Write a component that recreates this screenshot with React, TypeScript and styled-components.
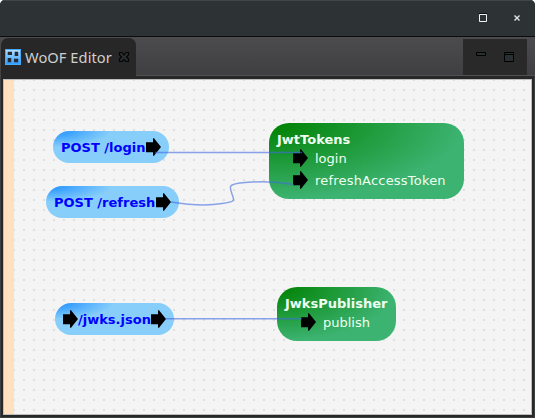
import React from "react";
import styled, { createGlobalStyle } from "styled-components";

const GlobalStyle = createGlobalStyle`
  * { box-sizing: border-box; }
  body { margin: 0; background: #fff; overflow: hidden; }
`;

const Window = styled.div`
  display: flex;
  flex-direction: column;
  width: 535px;
  height: 418px;
  background: #2d3235;
  border-radius: 5px 5px 0 0;
  overflow: hidden;
`;

const TitleBar = styled.header`
  display: flex;
  flex: none;
  justify-content: flex-end;
  align-items: flex-start;
  height: 37px;
  background: #2d3234;
  border-top: 1px solid #414648;
  border-bottom: 1px solid #0b0c0c;
`;

const TitleIcons = styled.svg`
  display: block;
  width: 75px;
  height: 34px;
`;

const TabBar = styled.div`
  display: flex;
  flex: none;
  justify-content: space-between;
  height: 39px;
  padding: 1px 8px 0 1px;
  background: linear-gradient(#4c4c4e, #3f3f41);
  border-bottom: 1px solid #515153;
`;

const Tab = styled.div`
  display: flex;
  align-items: center;
  width: 135px;
  height: 38px;
  margin-bottom: -1px;
  padding-left: 4px;
  background: #272727;
  border-radius: 7px 7px 0 0;
`;

const TabLabel = styled.span`
  width: 97px;
  flex: none;
  padding-left: 4px;
  font: 14.67px/20px "Noto Sans", sans-serif;
  letter-spacing: 0.06px;
  color: #cfcfcf;
  white-space: nowrap;
`;

const Icon = styled.svg`
  display: block;
  flex: none;
`;

const ViewTools = styled.div`
  width: 64px;
  height: 36px;
  margin-top: 1px;
  background: #292929;
`;

const Frame = styled.div`
  flex: 1;
  display: flex;
  padding: 3px 2px 2px 2px;
  background: #272727;
  border: solid #3b4042;
  border-width: 0 1px 1px 1px;
`;

const Canvas = styled.main`
  position: relative;
  flex: 1;
  border: 1px solid #bdbdbd;
  background:
    linear-gradient(90deg, #ffe1bf 10px, transparent 10px),
    conic-gradient(from 90deg at 8px 8px, #dfdfdf 90deg, transparent 0) 1px 1px / 10px 10px,
    #f4f4f4;
`;

const Wires = styled.svg`
  position: absolute;
  left: 0;
  top: 0;
  width: 527px;
  height: 334px;
`;

/* Diagram nodes sit at free positions on the canvas. */
const Endpoint = styled.div<{ $x: number; $y: number; $w: number }>`
  position: absolute;
  left: ${(p) => p.$x}px;
  top: ${(p) => p.$y}px;
  width: ${(p) => p.$w}px;
  height: 32px;
  padding: 0 8px;
  display: flex;
  align-items: center;
  border-radius: 16px;
  background: radial-gradient(50% 50% at 0 0, dodgerblue, lightskyblue);
  font: bold 13px/16px "DejaVu Sans", sans-serif;
  color: #0000ff;
  white-space: nowrap;
`;

const EndpointName = styled.span`
  flex: 1;
  padding-top: 2px;
`;

const Section = styled.div<{ $x: number; $y: number; $w: number; $h: number }>`
  position: absolute;
  left: ${(p) => p.$x}px;
  top: ${(p) => p.$y}px;
  width: ${(p) => p.$w}px;
  height: ${(p) => p.$h}px;
  padding: 9px 8px 0;
  border-radius: 20px;
  background: radial-gradient(100% 100% at 0 0, green, mediumseagreen);
  font: 13px/16px "DejaVu Sans", sans-serif;
  color: #f0fff0;
  white-space: nowrap;
`;

const SectionName = styled.div`
  font-weight: bold;
  margin-bottom: -1px;
`;

const Input = styled.div`
  display: flex;
  align-items: center;
  gap: 7px;
  height: 22px;
  padding-left: 16px;
`;

const InputName = styled.span<{ $tracking?: number }>`
  padding-top: 2px;
  letter-spacing: ${(p) => p.$tracking ?? 0}px;
`;

const Arrow = () => (
  <Icon width="15" height="18" viewBox="0 0 15 18">
    <path d="M0 4.2H7V0.3H8L15 9L8 17.7H7V14.2H0Z" fill="#000" />
  </Icon>
);

const GridIcon = () => (
  <Icon width="16" height="16" viewBox="0 0 16 16">
    <defs>
      <linearGradient id="tile" x1="0" y1="0" x2="0" y2="1">
        <stop offset="0" stopColor="#b4dfff" />
        <stop offset="1" stopColor="#2d9cff" />
      </linearGradient>
    </defs>
    <rect width="16" height="16" fill="#48a9fa" />
    <rect x="1" y="1" width="14" height="14" fill="url(#tile)" />
    <path d="M2.7 2.8h4.300v3.200H2.700zM9.700 2.800h3.500v4.200H9.700zM2.700 9h3.500v4.200H2.700zM9 9.800h4.200v3.400H9z" fill="#272b2f" />
  </Icon>
);

const CloseIcon = () => (
  <Icon width="12" height="12" viewBox="0 0 12 12">
    <path
      d="M1.5 1.5H4L6 4L8 1.5H10.5V4L8.5 6L10.5 8V10.5H8L6 8.5L4 10.5H1.5V8L3.5 6L1.5 4Z"
      fill="#292d2f"
      stroke="#050505"
      strokeWidth="1.2"
    />
  </Icon>
);

export default function App() {
  return (
    <>
      <GlobalStyle />
      <Window>
        <TitleBar>
          <TitleIcons viewBox="460 1 75 34">
            <path d="M479.5 14.5h7v7h-7z" fill="none" stroke="#f0f3f1" />
            <path d="M479 13.5h8" stroke="#0c0f10" />
            <path d="M514.5 15.5l5 5m0-5l-5 5" stroke="#e4e5e6" strokeWidth="1.4" />
          </TitleIcons>
        </TitleBar>
        <TabBar>
          <Tab>
            <GridIcon />
            <TabLabel>WoOF Editor</TabLabel>
            <CloseIcon />
          </Tab>
          <ViewTools>
            <Icon width="64" height="36" viewBox="463 39 64 36">
              <path d="M476.5 52.5h9v3h-9z" fill="#293034" stroke="#000" />
              <path d="M504.5 52.5h9v9h-9zM504 54.5h10" fill="#293034" stroke="#000" />
            </Icon>
          </ViewTools>
        </TabBar>
        <Frame>
          <Canvas>
            <Endpoint $x={49} $y={51} $w={116}>
              <EndpointName>POST /login</EndpointName>
              <Arrow />
            </Endpoint>
            <Endpoint $x={42} $y={106} $w={133}>
              <EndpointName>POST /refresh</EndpointName>
              <Arrow />
            </Endpoint>
            <Endpoint $x={51} $y={223} $w={119}>
              <Arrow />
              <EndpointName>/jwks.json</EndpointName>
              <Arrow />
            </Endpoint>
            <Section $x={265} $y={43} $w={195} $h={76}>
              <SectionName>JwtTokens</SectionName>
              <Input><Arrow /><InputName>login</InputName></Input>
              <Input><Arrow /><InputName $tracking={0.2}>refreshAccessToken</InputName></Input>
            </Section>
            <Section $x={273} $y={207} $w={119} $h={54}>
              <SectionName>JwksPublisher</SectionName>
              <Input><Arrow /><InputName>publish</InputName></Input>
            </Section>
            <Wires viewBox="4 80 527 334">
              <g fill="none" stroke="#4169e1" strokeOpacity="0.6" strokeWidth="1.5">
                <path d="M155 152.5H302" />
                <path d="M171 202C190 205 207 206 222 203.5C235 202 235 201 232 194C229 186 229 184.500 240 183C262 180.500 280 182 294 184.500" />
                <path d="M166 318.800H302" />
              </g>
            </Wires>
          </Canvas>
        </Frame>
      </Window>
    </>
  );
}
